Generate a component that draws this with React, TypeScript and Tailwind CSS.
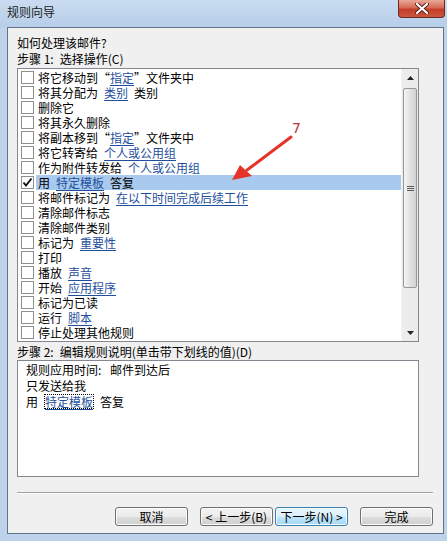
import type { ReactNode } from 'react'

const font = "font-['Noto_Sans_CJK_SC','Liberation_Sans',sans-serif]"

function L({ children }: { children: ReactNode }) {
  return (
    <span className="inline-block leading-[15px] text-[#1f4f9c] underline underline-offset-[2px]">{children}</span>
  )
}

function Sp() {
  return <span className="inline-block w-[6px]" />
}

function Lq() {
  return <span className="inline-block w-[12px] text-right">“</span>
}

function Rq() {
  return <span className="inline-block w-[12px] text-left">”</span>
}

const rows: { label: ReactNode; checked?: boolean }[] = [
  { label: <>将它移动到<Lq /><L>指定</L><Rq />文件夹中</> },
  { label: <>将其分配为<Sp /><L>类别</L><Sp />类别</> },
  { label: <>删除它</> },
  { label: <>将其永久删除</> },
  { label: <>将副本移到<Lq /><L>指定</L><Rq />文件夹中</> },
  { label: <>将它转寄给<Sp /><L>个人或公用组</L></> },
  { label: <>作为附件转发给<Sp /><L>个人或公用组</L></> },
  { label: <>用<Sp /><L>特定模板</L><Sp />答复</>, checked: true },
  { label: <>将邮件标记为<Sp /><L>在以下时间完成后续工作</L></> },
  { label: <>清除邮件标志</> },
  { label: <>清除邮件类别</> },
  { label: <>标记为<Sp /><L>重要性</L></> },
  { label: <>打印</> },
  { label: <>播放<Sp /><L>声音</L></> },
  { label: <>开始<Sp /><L>应用程序</L></> },
  { label: <>标记为已读</> },
  { label: <>运行<Sp /><L>脚本</L></> },
  { label: <>停止处理其他规则</> },
]

function Checkbox({ checked }: { checked?: boolean }) {
  return (
    <div className="w-[13px] h-[13px] shrink-0 border border-[#8e8f8f] bg-white flex items-center justify-center">
      {checked && (
        <svg width="11" height="11" viewBox="0 0 11 11">
          <path d="M1.5 5.5 L4 8.5 L9.5 1.5" fill="none" stroke="#111" strokeWidth="1.9" />
        </svg>
      )}
    </div>
  )
}

function Scrollbar() {
  return (
    <div className="w-[17px] shrink-0 flex flex-col bg-[#ececec] border-l border-[#f4f4f4]">
      <div className="h-[17px] flex items-center justify-center">
        <svg width="7" height="4" viewBox="0 0 7 4">
          <path d="M0 4 L3.5 0 L7 4 Z" fill="#222" />
        </svg>
      </div>
      <div className="flex-1 px-[1px] pt-[2px]">
        <div className="h-[200px] rounded-[2px] border border-[#979797] bg-[linear-gradient(90deg,#f4f4f4,#e2e2e2_50%,#d2d2d2)] flex flex-col items-center justify-center gap-[1px]">
          <div className="w-[7px] h-[1px] bg-[#5c5c5c]" />
          <div className="w-[7px] h-[1px] bg-[#5c5c5c]" />
          <div className="w-[7px] h-[1px] bg-[#5c5c5c]" />
        </div>
      </div>
      <div className="h-[17px] flex items-center justify-center">
        <svg width="7" height="4" viewBox="0 0 7 4">
          <path d="M0 0 L3.5 4 L7 0 Z" fill="#222" />
        </svg>
      </div>
    </div>
  )
}

function Button({ children, focused }: { children: ReactNode; focused?: boolean }) {
  return (
    <button
      className={
        focused
          ? 'w-[73px] h-[19px] rounded-[3px] border border-[#3c7fb1] bg-[linear-gradient(#eaf6fd_0%,#d9f0fc_50%,#bee6fd_51%,#a7d9f5_100%)] shadow-[inset_0_0_0_1px_#f6fbfe] text-[12px] leading-[17px] text-black'
          : 'w-[73px] h-[19px] rounded-[3px] border border-[#707070] bg-[linear-gradient(#f2f2f2_0%,#ebebeb_50%,#dddddd_51%,#cfcfcf_100%)] shadow-[inset_0_0_0_1px_#fbfbfb] text-[12px] leading-[17px] text-black'
      }
    >
      {children}
    </button>
  )
}

export default function App() {
  return (
    <div className={`relative w-[447px] h-[541px] overflow-hidden bg-[#bed3eb] text-[12px] text-black ${font}`}>
      {/* title bar */}
      <div className="h-[27px] flex items-start justify-between bg-[linear-gradient(180deg,#c9dcf1,#b7cde8)]">
        <span className="pl-[7px] pt-[4px] leading-[16px] text-[#1b1b1b]">规则向导</span>
        <div className="mr-[2px] w-[47px] h-[18px] rounded-b-[4px] border border-t-0 border-[#6f2a22] bg-[linear-gradient(180deg,#e7a898,#d76a55_45%,#c53d27_55%,#c9573f)] flex items-center justify-center">
          <svg width="14" height="11" viewBox="0 0 14 11">
            <path d="M2 1 L12 10 M12 1 L2 10" stroke="#5a1e18" strokeWidth="4" strokeLinecap="round" />
            <path d="M2 1 L12 10 M12 1 L2 10" stroke="#fff" strokeWidth="2.2" strokeLinecap="round" />
          </svg>
        </div>
      </div>

      {/* client area */}
      <div className="ml-[7px] mr-[3px] h-[507px] border border-[#5f7389] bg-[#f0f0f0] flex flex-col">
        <div className="pl-[9px] pt-[7px] leading-[16px]">如何处理该邮件?</div>
        <div className="pl-[9px] leading-[16px]">步骤 1:<Sp />选择操作(C)</div>

        <div className="ml-[9px] mt-[1px] w-[402px] h-[274px] border border-[#828790] bg-white flex">
          <div className="flex-1 pt-[1px]">
            {rows.map((r, i) => (
              <div key={i} className="h-[15px] flex items-center pl-[3px] whitespace-nowrap">
                <Checkbox checked={r.checked} />
                <div
                  className={
                    r.checked
                      ? 'ml-[2px] pl-[2px] flex-1 h-[15px] leading-[15px] bg-[#a9caee]'
                      : 'ml-[2px] pl-[2px] flex-1 h-[15px] leading-[15px]'
                  }
                >
                  {r.label}
                </div>
              </div>
            ))}
          </div>
          <Scrollbar />
        </div>

        <div className="pl-[9px] mt-[2px] leading-[16px]">步骤 2:<Sp />编辑规则说明(单击带下划线的值)(D)</div>

        <div className="ml-[9px] w-[402px] h-[117px] border border-[#828790] bg-white pl-[8px] pt-[1px] leading-[16px]">
          <div>规则应用时间<span className="inline-block w-[6px]">:</span><Sp />邮件到达后</div>
          <div>只发送给我</div>
          <div className="whitespace-nowrap">
            用<Sp />
            <span className="inline-block leading-[13px] border border-dotted border-black text-[#1f4f9c] underline underline-offset-[2px]">
              特定模板
            </span>
            <Sp />答复
          </div>
        </div>

        <div className="ml-[9px] mt-[15px] w-[416px] border-t border-[#a0a0a0] border-b border-b-white" />

        <div className="mt-[13px] pr-[10px] flex justify-end">
          <Button>取消</Button>
          <div className="ml-[12px] flex gap-[2px]">
            <Button>&lt; 上一步(B)</Button>
            <Button focused>下一步(N) &gt;</Button>
          </div>
          <div className="ml-[12px]">
            <Button>完成</Button>
          </div>
        </div>
      </div>

      {/* annotation arrow */}
      <svg className="absolute left-0 top-0 pointer-events-none" width="447" height="541" viewBox="0 0 447 541">
        <path d="M291 137 L247 170" stroke="#e5332a" strokeWidth="3" strokeLinecap="round" />
        <path d="M232 180 L240 165 L252 176 Z" fill="#e5332a" />
        <text x="292" y="133" fill="#b8333a" fontSize="14" fontFamily="'DejaVu Sans', sans-serif">7</text>
      </svg>
    </div>
  )
}
